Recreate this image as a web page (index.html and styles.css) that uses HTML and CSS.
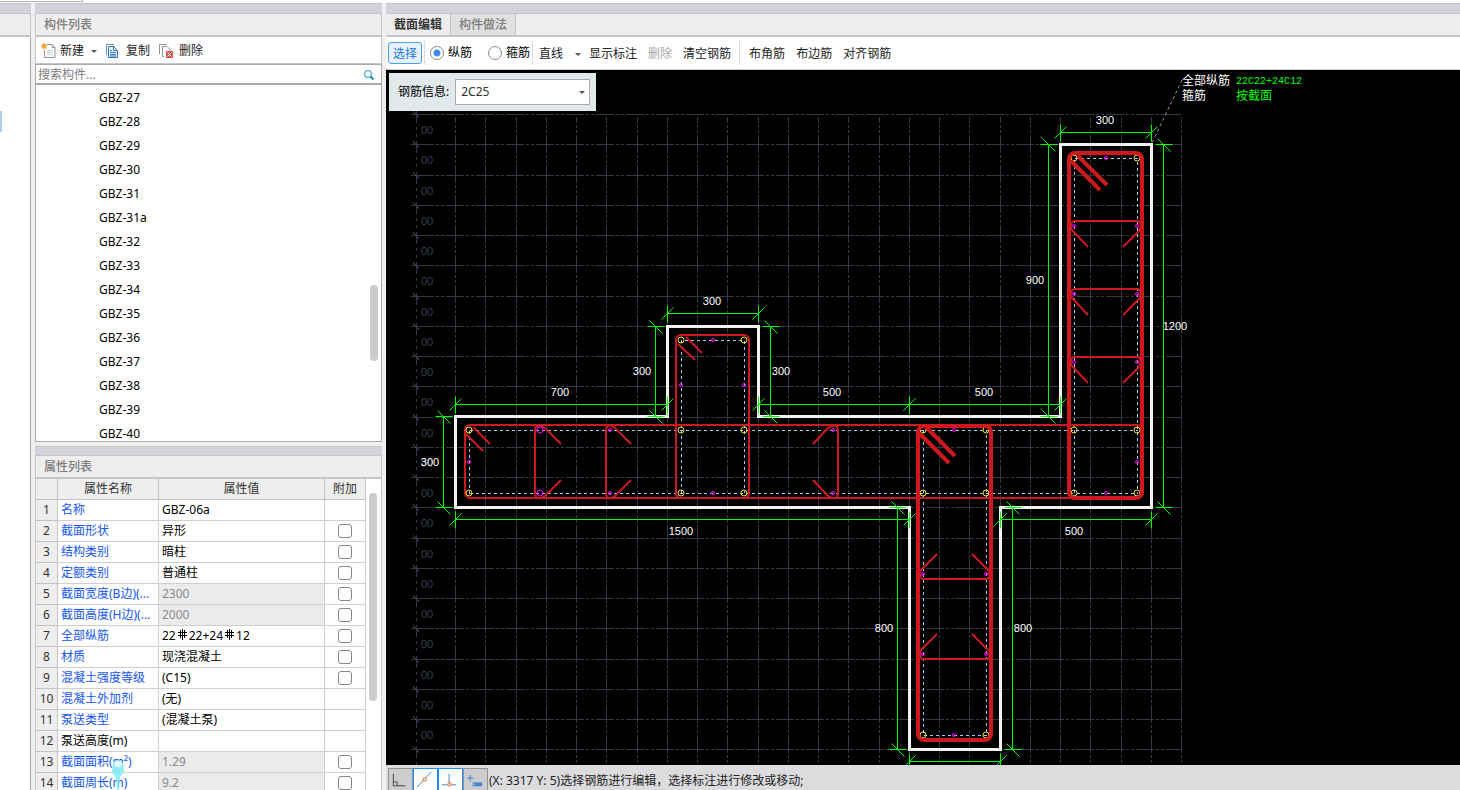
FILE: index.html
```html
<!DOCTYPE html>
<html lang="zh-CN">
<head>
<meta charset="utf-8">
<title>截面编辑</title>
<link rel="stylesheet" href="styles.css">
</head>
<body>
<div class="topline"><span class="topline-box"></span></div>
<div class="workspace">
  <aside class="dock dock-edge">
    <div class="band"></div>
    <div class="panel-head"></div>
    <div class="edge-body"><span class="edge-mark"></span></div>
  </aside>

  <section class="dock dock-left">
    <div class="band"></div>
    <h2 class="panel-head">构件列表</h2>
    <div class="left-tools">
      <button class="tool" type="button">
        <svg width="16" height="16" viewBox="0 0 16 16"><path d="M6 1.500h5l3 3v10H3.500V7" fill="none" stroke="#8b959e"/><path d="M11 1.500v3h3" fill="none" stroke="#8b959e"/><path d="M6 7.500h6M6 9.500h6M6 11.500h6" stroke="#cfd4d8"/><path d="M1 1h5v5H1z" fill="#ffd98f"/><path d="M1 1l4 4M5 1L1 5M3 0v6M0 3h6" stroke="#ee9a25"/></svg>
        新建<span class="caret"></span></button>
      <button class="tool" type="button">
        <svg width="16" height="16" viewBox="0 0 16 16"><path d="M1.500 12V1.500H9" fill="none" stroke="#7f93a8"/><path d="M3.500 3.500h5l4 4v7h-9z" fill="#eef5fc" stroke="#2f74c0"/><path d="M8.500 3.500v4h4" fill="none" stroke="#2f74c0"/><path d="M5 7.500h2M5 9.500h6M5 11.500h6M5 13h6" stroke="#2f74c0"/></svg>
        复制</button>
      <button class="tool" type="button">
        <svg width="16" height="16" viewBox="0 0 16 16"><path d="M1.500 11V1.500H9M6 13.500H4.500v-10H9l3 3V8" fill="none" stroke="#8b959e"/><path d="M8 8h7v7H8z" fill="#d9534f"/><path d="M9.500 9.500l4 4M13.500 9.500l-4 4" stroke="#fff"/></svg>
        删除</button>
    </div>
    <div class="search">
      <input class="search-input" type="text" placeholder="搜索构件..." aria-label="搜索构件">
      <svg width="12" height="12" viewBox="0 0 12 12"><circle cx="5" cy="5" r="3.500" fill="#fff" stroke="#62b4d8" stroke-width="1.500"/><path d="M7.500 7.500l3 3" stroke="#1f86b8" stroke-width="2"/></svg>
    </div>
    <div class="list-wrap">
      <ul class="list">
        <li>GBZ-27</li><li>GBZ-28</li><li>GBZ-29</li><li>GBZ-30</li><li>GBZ-31</li>
        <li>GBZ-31a</li><li>GBZ-32</li><li>GBZ-33</li><li>GBZ-34</li><li>GBZ-35</li>
        <li>GBZ-36</li><li>GBZ-37</li><li>GBZ-38</li><li>GBZ-39</li><li>GBZ-40</li>
      </ul>
      <span class="scroll scroll-list"></span>
    </div>
    <div class="band band-mid"></div>
    <h2 class="panel-head">属性列表</h2>
    <div class="props-wrap">
      <table class="props">
        <thead><tr><th class="c-no"></th><th class="c-name">属性名称</th><th>属性值</th><th class="c-add">附加</th></tr></thead>
        <tbody>
          <tr><th>1</th><td class="name">名称</td><td>GBZ-06a</td><td></td></tr>
          <tr><th>2</th><td class="name">截面形状</td><td>异形</td><td><input type="checkbox" aria-label="附加 截面形状"></td></tr>
          <tr><th>3</th><td class="name">结构类别</td><td>暗柱</td><td><input type="checkbox" aria-label="附加 结构类别"></td></tr>
          <tr><th>4</th><td class="name">定额类别</td><td>普通柱</td><td><input type="checkbox" aria-label="附加 定额类别"></td></tr>
          <tr><th>5</th><td class="name">截面宽度(B边)(...</td><td class="ro">2300</td><td><input type="checkbox" aria-label="附加 截面宽度"></td></tr>
          <tr><th>6</th><td class="name">截面高度(H边)(...</td><td class="ro">2000</td><td><input type="checkbox" aria-label="附加 截面高度"></td></tr>
          <tr><th>7</th><td class="name">全部纵筋</td><td>22<svg class="rebar" width="13" height="12" viewBox="0 0 13 12"><path d="M2 3.500h9M2 6.500h9M4.500 1v8M8.500 1v8M6.500 0v11" fill="none" stroke="#000"/></svg>22+24<svg class="rebar" width="13" height="12" viewBox="0 0 13 12"><path d="M2 3.500h9M2 6.500h9M4.500 1v8M8.500 1v8M6.500 0v11" fill="none" stroke="#000"/></svg>12</td><td><input type="checkbox" aria-label="附加 全部纵筋"></td></tr>
          <tr><th>8</th><td class="name">材质</td><td>现浇混凝土</td><td><input type="checkbox" aria-label="附加 材质"></td></tr>
          <tr><th>9</th><td class="name">混凝土强度等级</td><td>(C15)</td><td><input type="checkbox" aria-label="附加 混凝土强度等级"></td></tr>
          <tr><th>10</th><td class="name">混凝土外加剂</td><td>(无)</td><td></td></tr>
          <tr><th>11</th><td class="name">泵送类型</td><td>(混凝土泵)</td><td></td></tr>
          <tr><th>12</th><td class="name plain">泵送高度(m)</td><td></td><td></td></tr>
          <tr><th>13</th><td class="name">截面面积(m²)</td><td class="ro">1.29</td><td><input type="checkbox" aria-label="附加 截面面积"></td></tr>
          <tr><th>14</th><td class="name">截面周长(m)</td><td class="ro">9.2</td><td><input type="checkbox" aria-label="附加 截面周长"></td></tr>
        </tbody>
      </table>
      <span class="scroll scroll-props"></span>
      <svg class="pin" width="16" height="34" viewBox="0 0 16 34"><path d="M3 3Q8-1 13 3L14 12Q12 16 10 18L9 32H7L6 18Q3 16 2 12z" fill="#7fe9fb" opacity=".85"/><ellipse cx="8" cy="5" rx="4" ry="3" fill="#e6fcff"/></svg>
    </div>
  </section>

  <main class="dock dock-main">
    <div class="band"></div>
    <div class="tabs" role="tablist">
      <button class="tab tab-on" type="button" role="tab" aria-selected="true">截面编辑</button>
      <button class="tab" type="button" role="tab" aria-selected="false">构件做法</button>
    </div>
    <div class="bar">
      <button class="act act-on" type="button">选择</button>
      <span class="sep"></span>
      <label class="radio"><input type="radio" name="kind" checked>纵筋</label>
      <label class="radio radio-b"><input type="radio" name="kind">箍筋</label>
      <span class="sep"></span>
      <button class="act act-line" type="button">直线<span class="caret"></span></button>
      <button class="act" type="button">显示标注</button>
      <button class="act" type="button" disabled>删除</button>
      <button class="act" type="button">清空钢筋</button>
      <span class="sep sep-b"></span>
      <button class="act" type="button">布角筋</button>
      <button class="act" type="button">布边筋</button>
      <button class="act" type="button">对齐钢筋</button>
    </div>
    <div class="canvas">
      <svg class="drawing" width="100%" height="100%">
        <g transform="translate(-386 -70)">
          <g id="grid" class="grid"></g>
          <path class="outline" d="M455.500 416.500H667.500V326.500H758.500V416.500H1060.500V144.500H1151.500V507.500H1000.500V749.500H909.500V507.500H455.500z"/>
          <g class="axis">
            <path d="M1074.500 158.500H1137.500V493.500H1074.500z"/>
            <path d="M469.500 430.500H1137.500M469.500 493.500H1074M469.500 430.500V493.500"/>
            <path d="M681.500 493V340.500H744.500V493"/>
            <path d="M923.500 430V735.500H986.500V430"/>
          </g>
          <g class="stirrup">
            <rect x="465" y="425" width="677" height="73" rx="5"/>
            <rect x="676" y="335" width="73" height="163" rx="5"/>
            <path d="M466 434l17 17M473 427l17 17M678 344l17 16M686 337l16 16"/>
            <path d="M561 444L545 428Q535 422 535 431V492Q535 502 545 496L561 480"/>
            <path d="M631 444L615 428Q606 422 606 431V492Q606 502 615 496L631 480"/>
            <path d="M813 444L828 428Q838 422 838 431V492Q838 502 828 496L813 480"/>
            <path d="M1088 247L1071 229Q1070 221 1075 221H1137Q1142 221 1140 230L1123 247"/>
            <path d="M1088 315L1071 297Q1070 289 1075 289H1137Q1142 289 1140 298L1123 315"/>
            <path d="M1088 383L1071 365Q1070 357 1075 357H1137Q1142 357 1140 366L1123 383"/>
            <path d="M937 554L920 571Q919 579 924 579H986Q991 579 989 571L972 554"/>
            <path d="M937 634L920 651Q919 659 924 659H986Q991 659 989 651L972 634"/>
          </g>
          <g id="bars"></g>
          <g class="stirrup thick">
            <rect x="1069" y="153" width="73" height="345" rx="6"/>
            <rect x="918" y="426" width="73" height="314" rx="6"/>
            <path d="M1071 161l29 29M1078 156l29 29M920 434l29 29M926 427l29 29"/>
          </g>
          <g id="dims" class="dims"></g>
          <path class="leader" d="M1182 80L1152 143"/>
          <g class="note">
            <text x="1182" y="85">全部纵筋</text><text class="val mono" x="1236" y="84">22C22+24C12</text>
            <text x="1182" y="100">箍筋</text><text class="val" x="1236" y="100">按截面</text>
          </g>
        </g>
      </svg>
      <div class="info">
        <label for="bar-info">钢筋信息:</label>
        <span class="select-box"><select id="bar-info"><option>2C25</option></select><span class="caret"></span></span>
      </div>
    </div>
    <footer class="status">
      <button class="snap" type="button" aria-label="正交"><svg width="23" height="23" viewBox="0 0 24 24"><path d="M4.500 5v12.500H17M4.500 13.500h4v4" fill="none" stroke="#444"/></svg></button>
      <button class="snap snap-on" type="button" aria-label="中点"><svg width="23" height="23" viewBox="0 0 24 24"><path d="M3 19L18 3" stroke="#3f83cc"/><path d="M9.500 9.500h3v3h-3z" fill="#fff" stroke="#ee7326"/></svg></button>
      <button class="snap snap-on" type="button" aria-label="垂点"><svg width="23" height="23" viewBox="0 0 24 24"><path d="M3 16.500h15M10.500 5v11" stroke="#3f83cc"/><path d="M9.500 14.500h3v3h-3z" fill="#fff" stroke="#ee7326"/></svg></button>
      <button class="snap" type="button" aria-label="动态输入"><svg width="23" height="23" viewBox="0 0 24 24"><path d="M3 9.500h7M6.500 6v7" stroke="#3f83cc"/><path d="M9 14h10v4H9z" fill="#3f83cc"/><path d="M10 15h1v2h-1z" fill="#fff"/></svg></button>
      <span>(X: 3317 Y: 5)选择钢筋进行编辑，选择标注进行修改或移动;</span>
    </footer>
  </main>
</div>
<script src="drawing.js"></script>
</body>
</html>
```
FILE: styles.css
```css
* { box-sizing: border-box; }
body {
  margin: 0;
  height: 100vh;
  overflow: hidden;
  display: flex;
  flex-direction: column;
  background: #f0f0f0;
  color: #000;
  font: 12px/16px "Noto Sans", "Noto Sans CJK SC", sans-serif;
}
button, input, select { font: inherit; color: inherit; }
button { border: 0; background: none; padding: 0; white-space: nowrap; }

.topline { flex: none; height: 3px; background: #fff; }
.topline-box { display: block; width: 83px; height: 2px; border: solid #aeb3b3; border-width: 0 1px 1px 0; }

.workspace { flex: 1; min-height: 0; display: flex; gap: 4px; }
.dock { display: flex; flex-direction: column; min-height: 0; min-width: 0; }
.dock-edge { flex: none; width: 31px; }
.dock-left { flex: none; width: 347px; }
.dock-main { flex: 1; }
.band { flex: none; height: 11px; background: #d3d4db; border: solid #c2c5ca; border-width: 1px 0; }
.band-mid { height: 10px; margin-top: 4px; }
.panel-head {
  flex: none; height: 23px; margin: 0; padding: 3px 8px;
  background: #eee; border: solid #c2c5ca; border-width: 0 1px 2px;
  color: #7c7c7c; font-size: 12px; line-height: 16px; font-weight: 500;
}
.dock-edge .panel-head { border-left: 0; }
.edge-body { flex: 1; background: #fff; border-right: 1px solid #aaa; padding-top: 74px; }
.edge-mark { display: block; width: 2px; height: 21px; background: #b0c9ee; }

.left-tools {
  flex: none; height: 27px; display: flex; align-items: center; gap: 8px; padding: 2px 0 0 5px;
  background: #fff; border: solid #c2c5ca; border-width: 0 1px 1px;
}
.tool { display: flex; align-items: center; gap: 3px; color: #222; }
.tool + .tool { gap: 5px; }
.caret { width: 0; height: 0; border: solid transparent; border-width: 3px 3px 0; border-top-color: #555; }
.tool .caret { margin-left: 4px; }
.search {
  flex: none; height: 20px; display: flex; align-items: center; padding: 1px 6px 0 0;
  background: #fff; border: 1px solid #aaa;
}
.search-input { flex: 1; min-width: 0; border: 0; outline: 0; padding: 0 2px; background: none; }
.search-input::placeholder { color: #7c7c7c; opacity: 1; }
.list-wrap { position: relative; flex: none; height: 358px; background: #fff; border: 1px solid #aaa; overflow: hidden; }
.list { margin: 0; padding: 1px 0 0; list-style: none; }
.list li { height: 24px; padding-left: 63px; line-height: 24px; }
.scroll { position: absolute; width: 8px; border-radius: 4px; background: #cbcbcb; }
.scroll-list { right: 3px; top: 200px; height: 76px; }
.scroll-props { right: 4px; top: 14px; height: 208px; }

.props-wrap { position: relative; flex: 1; min-height: 0; overflow: hidden; background: #fff; border: solid #c8c8c8; border-width: 0 1px; padding-right: 15px; }
.props { width: 100%; table-layout: fixed; border-collapse: separate; border-spacing: 0; }
.props th, .props td {
  height: 21px; padding: 0 3px; border: solid #d0d0d0; border-width: 0 1px 1px 0;
  text-align: left; white-space: nowrap; overflow: hidden;
}
.props th { background: #eee; color: #333; font-weight: 400; text-align: center; padding: 0; border-color: #c4c4c4; }
.props .c-no { width: 22px; }
.props .c-name { width: 101px; }
.props .c-add { width: 41px; }
.props .name { color: #1456f0; padding: 0 0 0 3px; }
.props .plain { color: #000; }
.props .ro { background: #ebebeb; color: #8a8a8a; }
.props td:last-child { text-align: center; padding: 0; }
.props input { appearance: none; display: block; width: 14px; height: 14px; margin: 0 auto; border: 1px solid #858585; border-radius: 3px; background: #fff; }
.rebar { vertical-align: -1px; }
.pin { position: absolute; left: 74px; top: 280px; }

.tabs { flex: none; height: 23px; display: flex; background: #eee; border-bottom: 2px solid #c2c5ca; }
.tab { padding: 0 8px; background: #e0e0e0; border-right: 1px solid #c2c5ca; color: #7c7c7c; font-weight: 500; }
.tab-on { background: #eee; color: #333; font-weight: 700; }

.bar { flex: none; height: 33px; display: flex; align-items: center; padding-left: 2px; background: #fff; border-bottom: 1px solid #c8c8c8; white-space: nowrap; }
.act { height: 22px; padding: 2px 4px 0; margin-right: 1px; border: 1px solid transparent; border-radius: 3px; color: #222; }
.act:disabled { color: #a8a8a8; }
.act-on { background: #e9f3fe; border-color: #4c9df5; color: #1878dc; }
.act-line { display: flex; align-items: center; gap: 12px; padding-right: 2px; margin-right: 0; }
.sep { width: 1px; height: 24px; margin: 0 1px; background: #dcdcdc; }
.sep-b { margin: 0 4px 0 2px; }
.radio { display: flex; align-items: center; gap: 4px; padding-left: 4px; }
.radio-b { padding: 0 1px 0 16px; }
.radio input { appearance: none; width: 14px; height: 14px; margin: 0; border: 1px solid #8a8a8a; border-radius: 50%; background: #fff; }
.radio input:checked { background: radial-gradient(circle, #3b8df0 3px, #fff 4px); }

.canvas { position: relative; flex: 1; min-height: 0; background: #000; overflow: hidden; }
.drawing { display: block; }
.info { position: absolute; left: 3px; top: 3px; display: flex; align-items: center; gap: 6px; padding: 6px 6px 6px 9px; background: #e1e9eb; white-space: nowrap; }
.select-box { position: relative; display: block; width: 135px; height: 26px; }
.select-box select { appearance: none; width: 100%; height: 100%; padding: 0 5px; border: 1px solid #aaa; border-radius: 0; background: #fff; color: #333; }
.select-box .caret { position: absolute; right: 5px; top: 12px; }

.grid path { stroke: #323844; fill: none; shape-rendering: crispEdges; }
.grid .rule { stroke-dasharray: 18 2 3 2 3 2; }
.grid text { fill: #3a404b; font: 11px "Liberation Sans", sans-serif; }
.outline { fill: none; stroke: #f2f2f2; stroke-width: 3; shape-rendering: crispEdges; }
.axis { fill: none; stroke: #a9cdf0; stroke-dasharray: 3 3; shape-rendering: crispEdges; }
.stirrup { fill: none; stroke: #cc181e; stroke-width: 2; }
.thick { stroke-width: 4; }
.corner { fill: none; stroke: #f5e11c; }
.side { fill: none; stroke: #f0f; }
.dims path { stroke: #0f0; fill: none; }
.dims text { fill: #fff; font: 11px "Liberation Sans", sans-serif; text-anchor: middle; }
.leader { stroke: #999; stroke-dasharray: 3 3; }
.note text { fill: #fff; font: 12px "Noto Sans CJK SC", sans-serif; }
.note .val { fill: #0f0; }
.note .mono { font: 10px "Liberation Mono", monospace; }

.status { flex: none; height: 25px; display: flex; align-items: flex-start; padding: 3px 0 0 2px; background: #dcdcde; color: #222; line-height: 25px; white-space: nowrap; overflow: hidden; }
.snap { width: 25px; height: 25px; border: 1px solid #929292; background: #cdcdcf; }
.snap svg { display: block; }
.snap-on { background: #fff; border-color: #1e8cff; }
.status span { padding-left: 1px; }
```
FILE: drawing.js
```js
const NS = "http://www.w3.org/2000/svg";

function add(parent, tag, attrs, text) {
  const el = document.createElementNS(NS, tag);
  for (const key in attrs) el.setAttribute(key, attrs[key]);
  if (text) el.textContent = text;
  parent.appendChild(el);
}

// Grid: one cell is 100 mm
const CELL = 30.25, LEFT = 455, TOP = 114;
const grid = document.getElementById("grid");
for (let i = 0; i <= 24; i++) {
  const x = Math.round(LEFT + i * CELL) + 0.5;
  add(grid, "path", { class: "rule", d: `M${x} ${TOP + 3}V900`, "stroke-dashoffset": 12 });
}
for (let i = 0; i <= 21; i++) {
  const y = Math.round(TOP + i * CELL) + 0.5;
  add(grid, "path", { class: "rule", d: `M416 ${y}H1181`, "stroke-dashoffset": 0 });
  add(grid, "path", { d: `M411 ${y}h9M413 ${y - 3}l6 6M416.5 ${y - 4}v12M416.5 ${y + 12}v3M416.5 ${y + 19}v3` });
  if (i < 21) add(grid, "text", { x: 421, y: y + 19 }, "00");
}

// Dimensions
const dims = document.getElementById("dims");
const horizontal = [[1060, 1151, 132], [667, 758, 313], [455, 667, 404], [758, 909, 404],
  [909, 1060, 404], [455, 909, 519], [1000, 1151, 519], [909, 1000, 761]];
for (const [a, b, line] of horizontal) {
  const y = line + 0.5;
  add(dims, "path", { d: `M${a} ${y}H${b}` });
  for (const end of [a, b]) {
    const x = end + 0.5;
    add(dims, "path", { d: `M${x} ${y - 8}v17M${x - 6} ${y + 6}l12 -12` });
  }
}
const vertical = [[1048, 144, 416], [1163, 144, 507], [655, 326, 416], [770, 326, 416],
  [443, 416, 507], [897, 507, 749], [1012, 507, 749]];
for (const [line, a, b] of vertical) {
  const x = line + 0.5;
  add(dims, "path", { d: `M${x} ${a}V${b}` });
  for (const end of [a, b]) {
    const y = end + 0.5;
    add(dims, "path", { d: `M${x - 8} ${y}h17M${x - 6} ${y - 6}l13 13` });
  }
}
const labels = [["300", 1105, 120], ["900", 1035, 280], ["1200", 1175, 326], ["300", 712, 301],
  ["300", 642, 371], ["300", 781, 371], ["700", 560, 392], ["500", 832, 392], ["500", 984, 392],
  ["300", 430, 462], ["1500", 681, 531], ["500", 1074, 531], ["800", 884, 628], ["800", 1023, 628]];
for (const [text, x, y] of labels) add(dims, "text", { x, y: y + 4 }, text);

// Longitudinal bars
const bars = document.getElementById("bars");
const corner = [[1074, 158], [1137, 158], [1074, 430], [1137, 430], [1074, 493], [1137, 493],
  [469, 430], [469, 493], [681, 340], [744, 340], [681, 430], [744, 430], [681, 493], [744, 493],
  [923, 430], [986, 430], [923, 493], [986, 493], [923, 735], [986, 735]];
for (const [cx, cy] of corner) add(bars, "circle", { class: "corner", cx, cy, r: 3 });
const side = [[1106, 158], [1074, 226], [1137, 226], [1074, 294], [1137, 294], [1074, 362], [1137, 362],
  [1137, 462], [1106, 493], [469, 462], [610, 430], [610, 493], [713, 340], [681, 385], [744, 385],
  [713, 493], [833, 430], [833, 493], [954, 430], [923, 574], [986, 574], [923, 654], [986, 654], [954, 735]];
for (const [cx, cy] of side) add(bars, "circle", { class: "side", cx, cy, r: 1.5 });
for (const cy of [430, 493]) add(bars, "circle", { class: "side", cx: 540, cy, r: 3 });
```
